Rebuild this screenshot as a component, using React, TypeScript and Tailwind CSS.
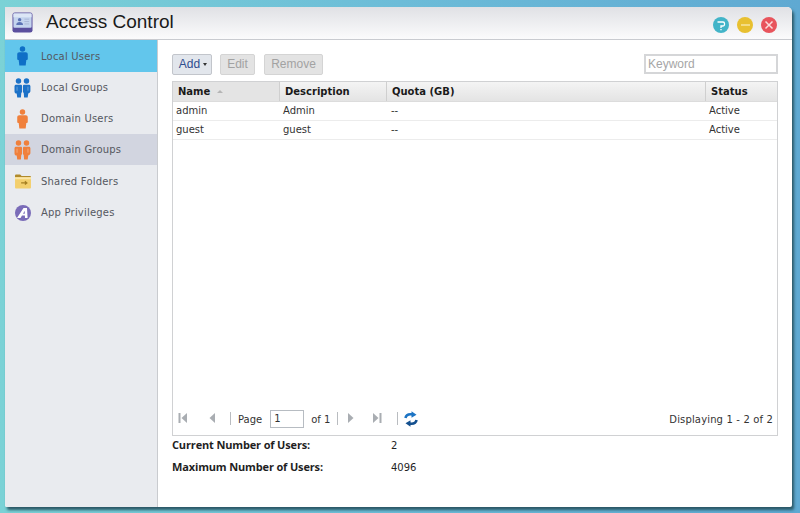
import { ReactElement } from 'react'

function Person({ color, className }: { color: string; className?: string }): ReactElement {
  return (
    <svg viewBox="0 0 12 22" className={className} fill={color}>
      <circle cx="6" cy="3.2" r="3" />
      <path d="M2.5 7h7c1.5 0 2.3 1 2.3 2.4v4.8c0 .8-.7 1.2-1.6 1.2l-.7 6.1H2.5l-.7-6.1C.9 15.400.2 15 .2 14.200V9.400C.2 8 1 7 2.500 7z" />
    </svg>
  )
}

function PersonPair({ color }: { color: string }): ReactElement {
  return (
    <svg viewBox="0 0 18 22" className="h-[20px] w-[17px]" fill={color}>
      <circle cx="4.600" cy="3.200" r="3" />
      <circle cx="13.400" cy="3.200" r="3" />
      <path d="M1.800 7.400h5.300c.8 0 1.400.6 1.400 1.400v6.600c0 .4-.3.7-.8.7l-.5 5.400H3.200l-.6-4.400C1 17 .2 16 .2 14.800V9c0-.9.700-1.600 1.600-1.600z" />
      <path d="M16.200 7.400h-5.300c-.8 0-1.400.6-1.400 1.400v6.600c0 .4.300.7.800.7l.5 5.400h3.900l.6-4.400c1.600-.5 2.400-1.500 2.400-2.700V9c0-.9-.700-1.600-1.500-1.600z" />
      <path d="M3 9.500v4.500M15 9.500v4.500" stroke="#ffffff" strokeOpacity="0.5" strokeWidth="0.7" fill="none" />
    </svg>
  )
}

function FolderIcon(): ReactElement {
  return (
    <svg viewBox="0 0 18 16" className="h-[15px] w-[18px]">
      <path d="M.5 1.500C.5 .900.900.500 1.500.500h4.500l1.500 1.500h9c.6 0 1 .4 1 1V4H.5z" fill="#b08a2c" />
      <path d="M.5 3.500h17v11c0 .6-.4 1-1 1h-15c-.6 0-1-.4-1-1z" fill="#f3cf6d" />
      <path d="M.5 3.500h17v2H.5z" fill="#fbe6a8" />
      <path d="M7 9.500h6M11 7.800l2.200 1.700L11 11.200" stroke="#a57f22" strokeWidth="1.200" fill="none" />
    </svg>
  )
}

function AppIcon(): ReactElement {
  return (
    <svg viewBox="0 0 16 16" className="h-4 w-4">
      <circle cx="8" cy="8" r="8" fill="#7a6cb8" />
      <path d="M2 13 8.500 3H12l.6 10h-2.600l-.1-2.400H7L5.500 13z" fill="#ffffff" />
      <path d="M8 8.800h1.800l-.1-3z" fill="#7a6cb8" />
    </svg>
  )
}

function AppBadge(): ReactElement {
  return (
    <svg viewBox="0 0 22 22" className="-mt-[2px] h-[21px] w-[21px]">
      <rect x="0.500" y="0.500" width="21" height="21" rx="2.500" fill="#5b4f9e" />
      <rect x="1.500" y="1.500" width="19" height="15" rx="1" fill="#c5d4ee" />
      <rect x="1.500" y="1.500" width="19" height="4" fill="#dce6f6" />
      <circle cx="8" cy="8" r="1.800" fill="#5d73b5" />
      <path d="M4.500 13.500c0-2 1.500-3 3.500-3s3.500 1 3.500 3z" fill="#5d73b5" />
      <path d="M13 7.500h5M13 10h5M13 12.500h5" stroke="#a9b6d6" strokeWidth="1" />
    </svg>
  )
}

function HelpIcon(): ReactElement {
  return (
    <svg viewBox="0 0 16 16" className="h-4 w-4">
      <circle cx="8" cy="8" r="8" fill="#42b4c8" />
      <path d="M4.500 5h5.500a1.500 1.500 0 0 1 1.500 1.500v1a1.500 1.500 0 0 1-1.500 1.500H8v2" stroke="#ffffff" strokeWidth="1.300" fill="none" />
      <path d="M8 12v1.300" stroke="#ffffff" strokeWidth="1.300" />
    </svg>
  )
}

function CloseIcon(): ReactElement {
  return (
    <svg viewBox="0 0 16 16" className="h-4 w-4">
      <circle cx="8" cy="8" r="8" fill="#e8545c" />
      <path d="M4.500 4.500l7 7M11.500 4.500l-7 7" stroke="#fbdcdc" strokeWidth="1.500" />
    </svg>
  )
}

function PagerArrow({ dir, bar }: { dir: 'left' | 'right'; bar?: boolean }): ReactElement {
  return (
    <svg viewBox="0 0 12 12" className="h-3 w-3" fill="#a9adb2">
      {dir === 'left' ? <path d="M9 1v10L3.500 6z" /> : <path d="M3 1v10l5.500-5z" />}
      {bar && (dir === 'left' ? <rect x="0.500" y="1" width="2" height="10" /> : <rect x="9.500" y="1" width="2" height="10" />)}
    </svg>
  )
}

function RefreshIcon(): ReactElement {
  return (
    <svg viewBox="0 0 14 16" className="h-4 w-[14px]" fill="none">
      <path d="M1.500 7C2 4 4.500 3 8 3.400" stroke="#1d74c4" strokeWidth="2.600" />
      <path d="M7.500 .2 12.500 3.800 7.500 6.800z" fill="#1d74c4" />
      <path d="M12.500 9C12 12 9.500 13 6 12.600" stroke="#14508f" strokeWidth="2.600" />
      <path d="M6.500 15.800 1.500 12.200 6.500 9.200z" fill="#14508f" />
    </svg>
  )
}

const navItems = [
  { label: 'Local Users', icon: <Person color="#0f6fc6" className="h-[20px] w-[11px]" />, cls: 'h-[32px] bg-[#62c6ec]' },
  { label: 'Local Groups', icon: <PersonPair color="#1c72c8" />, cls: 'h-[31px]' },
  { label: 'Domain Users', icon: <Person color="#f0803c" className="h-[20px] w-[11px]" />, cls: 'h-[31px]' },
  { label: 'Domain Groups', icon: <PersonPair color="#f0803c" />, cls: 'h-[31px] bg-[#d2d5e0]' },
  { label: 'Shared Folders', icon: <FolderIcon />, cls: 'h-[32px]' },
  { label: 'App Privileges', icon: <AppIcon />, cls: 'h-[31px]' },
]

const columns = [
  { label: 'Name', cls: 'w-[107px] bg-[#e4e4e4]' },
  { label: 'Description', cls: 'w-[107px]' },
  { label: 'Quota (GB)', cls: 'flex-1' },
  { label: 'Status', cls: 'w-[71px]' },
]

const users = [
  { name: 'admin', desc: 'Admin', quota: '--', status: 'Active' },
  { name: 'guest', desc: 'guest', quota: '--', status: 'Active' },
]

export default function App(): ReactElement {
  return (
    <div className="h-[513px] w-[800px] overflow-hidden bg-gradient-to-r from-[#7bd2d6] via-[#6cbcd8] to-[#5fa9d2] pl-[5px] pt-[7px] font-['DejaVu_Sans',sans-serif] text-[10px] text-[#333]">
      <div className="flex h-[500px] w-[787px] flex-col overflow-hidden rounded-tr-[5px] rounded-b-[2px] bg-white shadow-[2px_3px_3px_#2b5866]">
        {/* title bar */}
        <header className="flex h-[33px] shrink-0 items-center border-b border-[#c9cbd0] bg-gradient-to-b from-[#e0e1e5] to-[#fbfbfc] pl-[7px] pr-[15px]">
          <AppBadge />
          <h1 className="-mt-[3px] ml-[13px] font-['Liberation_Sans',sans-serif] text-[19px] leading-none text-[#1a1a1a]">Access Control</h1>
          <div className="ml-auto mt-[3px] flex gap-[8px]">
            <HelpIcon />
            <span className="flex h-4 w-4 items-center justify-center rounded-full bg-[#e8c030]">
              <span className="h-[2px] w-[9px] bg-[#f3dc84]" />
            </span>
            <CloseIcon />
          </div>
        </header>

        <div className="flex min-h-0 flex-1">
          {/* left navigation */}
          <nav className="w-[153px] shrink-0 border-r border-[#c9cbcf] bg-[#e9ebef]">
            {navItems.map((item) => (
              <div key={item.label} className={`flex items-center ${item.cls}`}>
                <span className="flex w-9 shrink-0 justify-center pr-[1px]">{item.icon}</span>
                <span className="tracking-[0.2px] text-[#55585f]">{item.label}</span>
              </div>
            ))}
          </nav>

          {/* user list */}
          <main className="flex min-w-0 flex-1 flex-col pl-[14px] pr-[14px] pt-[14px]">
            <div className="flex h-[21px] items-start">
              <button className="flex h-[21px] w-[40px] items-center justify-center gap-[3px] rounded-[2px] border border-[#c2c5cb] bg-[#e2e6ec] pb-[1px] pl-[2px] font-['Liberation_Sans',sans-serif] text-[12px] text-[#2f4d8f]">
                Add
                <span className="mt-[1px] border-x-[2.500px] border-t-[3px] border-x-transparent border-t-[#333]" />
              </button>
              <button className="ml-[8px] h-[21px] w-[35px] rounded-[2px] border border-[#d4d4d4] bg-[#e3e3e3] pb-[1px] font-['Liberation_Sans',sans-serif] text-[12px] text-[#a2a2a2]">Edit</button>
              <button className="ml-[9px] h-[21px] w-[59px] rounded-[2px] border border-[#d4d4d4] bg-[#e3e3e3] pb-[1px] font-['Liberation_Sans',sans-serif] text-[12px] text-[#a2a2a2]">Remove</button>
              <div className="ml-auto flex h-[20px] w-[134px] items-center border-2 border-[#d5d6d8] bg-white pl-[2px] font-['Liberation_Sans',sans-serif] text-[12px] text-[#a6a6a6]">Keyword</div>
            </div>

            <div className="mt-[6px] flex h-[355px] flex-col border border-[#d0d1d3]">
              <div className="flex h-[20px] shrink-0 border-b border-[#dcdcdc] bg-gradient-to-b from-[#f4f4f4] to-[#e4e4e4] text-[10px] font-bold text-[#1a1a1a]">
                {columns.map((col) => (
                  <div key={col.label} className={`flex items-center border-r border-[#cfcfcf] pl-[5px] last:border-r-0 ${col.cls}`}>
                    {col.label}
                    {col.label === 'Name' && <span className="ml-[7px] border-x-[3px] border-b-[3px] border-x-transparent border-b-[#b5b5b5]" />}
                  </div>
                ))}
              </div>
              {users.map((user) => (
                <div key={user.name} className="flex h-[19px] shrink-0 items-center border-b border-[#ececec] pb-[1px]">
                  <span className="w-[107px] pl-[3px]">{user.name}</span>
                  <span className="w-[107px] pl-[3px]">{user.desc}</span>
                  <span className="flex-1 pl-[4px]">{user.quota}</span>
                  <span className="w-[71px] pl-[3px]">{user.status}</span>
                </div>
              ))}

              {/* pager */}
              <div className="mt-auto flex h-[31px] shrink-0 items-center pb-[2px] pl-[5px] pr-[4px]">
                <span className="-mt-[2px]"><PagerArrow dir="left" bar /></span>
                <span className="-mt-[2px] ml-[16px]"><PagerArrow dir="left" /></span>
                <span className="ml-[12px] h-[13px] w-px bg-[#b9bcc0]" />
                <span className="ml-[7px] mt-[1px]">Page</span>
                <span className="ml-[8px] flex h-[18px] w-[34px] items-center border border-[#b7bcc2] bg-white pl-[3px]">1</span>
                <span className="ml-[7px] mt-[1px]">of 1</span>
                <span className="ml-[7px] h-[13px] w-px bg-[#b9bcc0]" />
                <span className="-mt-[2px] ml-[7px]"><PagerArrow dir="right" /></span>
                <span className="-mt-[2px] ml-[13px]"><PagerArrow dir="right" bar /></span>
                <span className="ml-[15px] h-[13px] w-px bg-[#b9bcc0]" />
                <span className="ml-[6px]"><RefreshIcon /></span>
                <span className="ml-auto mt-[1px] tracking-[0.15px]">Displaying 1 - 2 of 2</span>
              </div>
            </div>

            <dl className="-mt-[1px] font-['Open_Sans',sans-serif] text-[#1f1f1f]">
              <div className="flex h-[20px] items-center">
                <dt className="w-[219px] text-[11px] font-bold tracking-[-0.15px]">Current Number of Users:</dt>
                <dd className="font-['DejaVu_Sans',sans-serif] text-[10px]">2</dd>
              </div>
              <div className="mt-[2px] flex h-[20px] items-center">
                <dt className="w-[219px] text-[11px] font-bold tracking-[-0.15px]">Maximum Number of Users:</dt>
                <dd className="font-['DejaVu_Sans',sans-serif] text-[10px]">4096</dd>
              </div>
            </dl>
          </main>
        </div>
      </div>
    </div>
  )
}
